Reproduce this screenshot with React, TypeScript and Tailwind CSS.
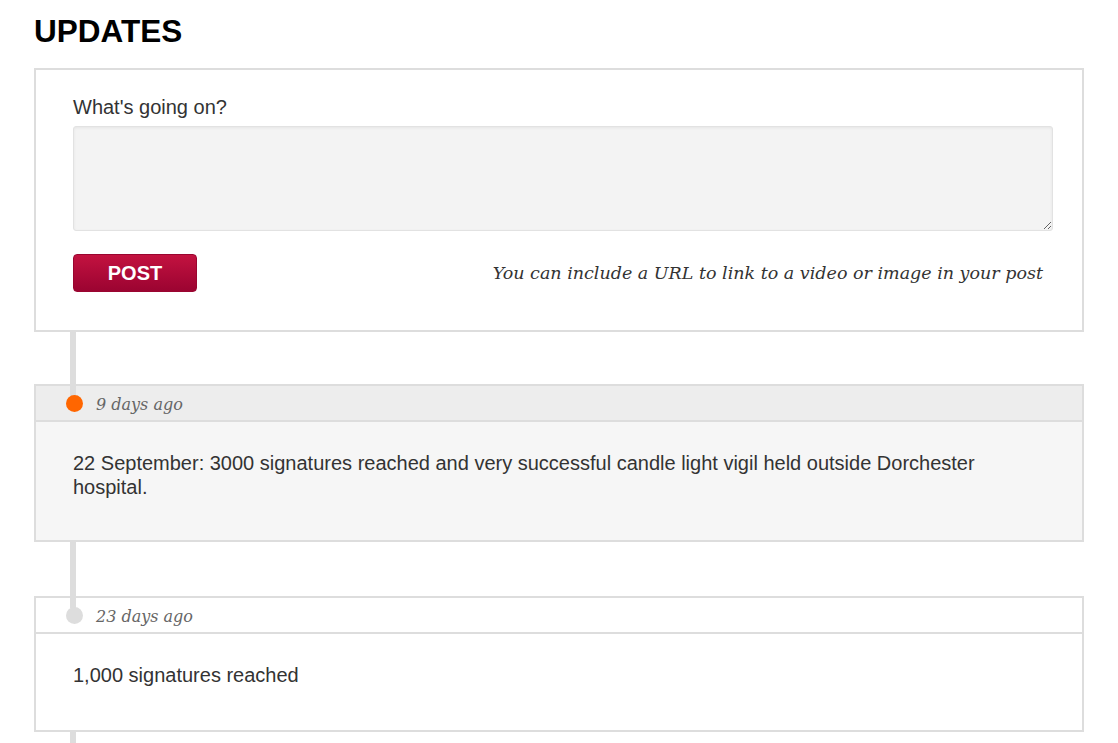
import React from 'react';

const updates = [
  {
    when: '9 days ago',
    text: '22 September: 3000 signatures reached and very successful candle light vigil held outside Dorchester hospital.',
    latest: true,
    gap: 'h-[52px]',
    pb: 'pb-[41px]',
  },
  {
    when: '23 days ago',
    text: '1,000 signatures reached',
    latest: false,
    gap: 'h-[54px]',
    pb: 'pb-[43px]',
  },
];

const serif = 'font-["DejaVu_Serif",Georgia,serif]';

export default function App() {
  return (
    <div className="min-h-[743px] bg-white px-[34px] pt-[16px] font-['Liberation_Sans',Arial,sans-serif] text-[#333]">
      <h1 className="text-[31.5px] font-bold leading-[31px] text-black">UPDATES</h1>

      {/* Post form */}
      <div className="mt-[21px] border-2 border-[#ddd] pl-[37px] pr-[29px] pt-[25px] pb-[38px]">
        <label className="block text-[20px] leading-[24px] text-[#333]">What's going on?</label>
        <textarea className="mt-[7px] block h-[105px] w-full resize-y rounded-[3px] border border-[#e2e2e2] bg-[#f3f3f3] shadow-[inset_0_1px_3px_rgba(0,0,0,0.06)] outline-none" />
        <div className="mt-[23px] flex items-center justify-between">
          <button className="h-[38px] w-[124px] rounded-[4px] border border-[#9a0530] bg-gradient-to-b from-[#c31240] to-[#9b0431] text-[20px] font-bold leading-none text-white">
            POST
          </button>
          <span className={`${serif} pr-[10px] text-[17.5px] italic text-[#333]`}>
            You can include a URL to link to a video or image in your post
          </span>
        </div>
      </div>

      {/* Timeline */}
      {updates.map((u) => (
        <div key={u.when}>
          <div className={`${u.gap} ml-[36px] w-[6px] bg-[#ddd]`} />
          <div className="border-2 border-[#ddd]">
            <div
              className={`relative flex h-[36px] items-center border-b-2 border-[#ddd] pl-[60px] ${
                u.latest ? 'bg-[#ededed]' : 'bg-white'
              }`}
            >
              <div className="absolute left-[34px] top-0 h-[10px] w-[6px] bg-[#ddd]" />
              <div
                className={`absolute left-[30px] top-[9px] h-[17px] w-[17px] rounded-full ${
                  u.latest ? 'bg-[#ff6600]' : 'bg-[#ddd]'
                }`}
              />
              <span className={`${serif} pt-[3px] text-[16px] italic text-[#666]`}>{u.when}</span>
            </div>
            <div
              className={`pl-[37px] pr-[37px] pt-[29px] ${u.pb} text-[20px] leading-[24px] text-[#333] ${
                u.latest ? 'bg-[#f6f6f6]' : 'bg-white'
              }`}
            >
              {u.text}
            </div>
          </div>
        </div>
      ))}
      <div className="ml-[36px] h-[40px] w-[6px] bg-[#ddd]" />
    </div>
  );
}
